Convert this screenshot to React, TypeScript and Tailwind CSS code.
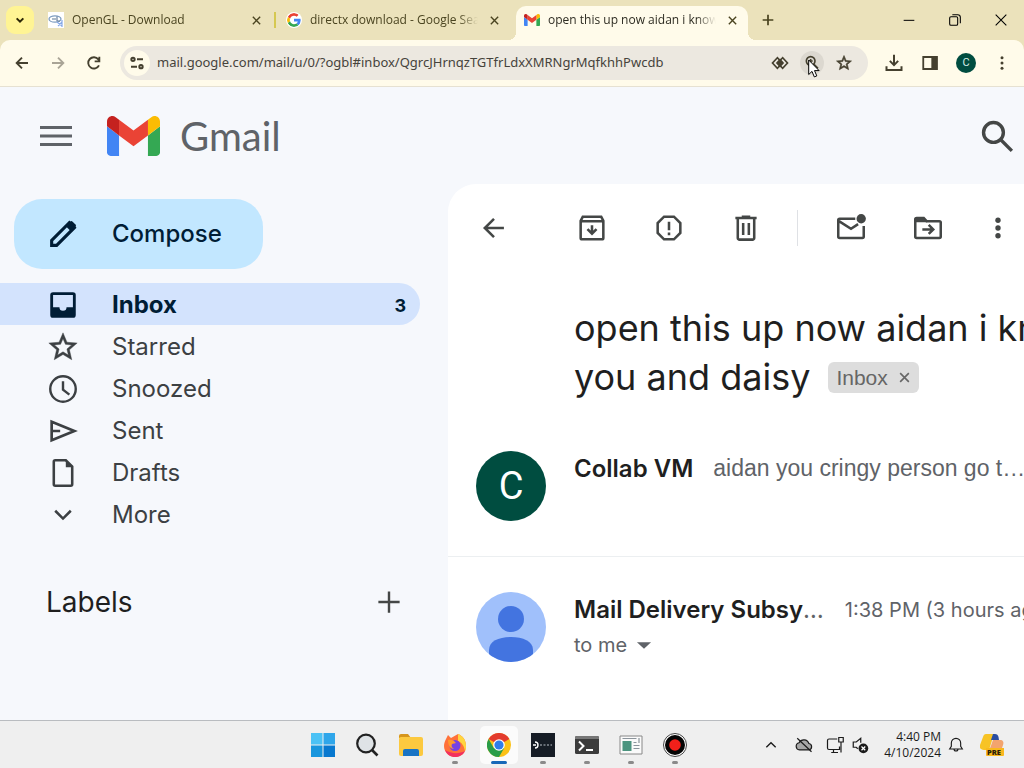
import React from 'react';

interface IconProps {
    className?: string;
    strokeWidth?: number;
    children: React.ReactNode;
}

const Icon: React.FC<IconProps> = ({ className = 'size-[34px]', strokeWidth = 2, children }) => (
    <svg
        viewBox="0 0 24 24"
        fill="none"
        stroke="currentColor"
        strokeWidth={strokeWidth}
        aria-hidden="true"
        className={`shrink-0 ${className}`}
    >
        {children}
    </svg>
);

const STAR_PATH = 'M22 9.24l-7.19-.62L12 2 9.19 8.63 2 9.24l5.46 4.73L5.82 21 12 17.27 18.18 21l-1.63-7.03L22 9.24zM12 15.4l-3.76 2.27 1-4.28-3.32-2.88 4.38-.38L12 6.1l1.71 4.04 4.38.38-3.32 2.88 1 4.28L12 15.4z';

const GmailMark = ({ className }: { className: string }) => (
    <svg viewBox="52 42 88 66" aria-hidden="true" className={className}>
        <path fill="#4285f4" d="M58 108h14V74L52 59v43c0 3.32 2.69 6 6 6" />
        <path fill="#34a853" d="M120 108h14c3.32 0 6-2.69 6-6V59l-20 15" />
        <path fill="#fbbc04" d="M120 48v26l20-15v-8c0-7.42-8.47-11.65-14.4-7.2" />
        <path fill="#ea4335" d="M72 74V48l24 18 24-18v26L96 92" />
        <path fill="#c5221f" d="M52 51v8l20 15V48l-5.6-4.2c-5.94-4.45-14.4-.22-14.4 7.2" />
    </svg>
);

const GoogleMark = () => (
    <svg viewBox="0 0 48 48" aria-hidden="true" className="size-4 shrink-0 rounded-full bg-white p-px">
        <path fill="#ea4335" d="M24 9.5c3.54 0 6.71 1.22 9.21 3.6l6.85-6.85C35.9 2.38 30.47 0 24 0 14.62 0 6.51 5.38 2.56 13.22l7.98 6.19C12.43 13.72 17.74 9.5 24 9.5z" />
        <path fill="#4285f4" d="M46.98 24.55c0-1.57-.15-3.09-.38-4.55H24v9.02h12.94c-.58 2.96-2.26 5.48-4.78 7.18l7.73 6c4.51-4.18 7.09-10.36 7.09-17.65z" />
        <path fill="#fbbc05" d="M10.53 28.59a14.5 14.5 0 0 1 0-9.18l-7.98-6.19a24 24 0 0 0 0 21.56l7.98-6.19z" />
        <path fill="#34a853" d="M24 48c6.48 0 11.93-2.13 15.89-5.81l-7.73-6c-2.15 1.45-4.92 2.3-8.16 2.3-6.26 0-11.57-4.22-13.47-9.91l-7.98 6.19C6.51 42.62 14.62 48 24 48z" />
    </svg>
);

const OpenGLMark = () => (
    <svg viewBox="0 0 16 16" fill="none" aria-hidden="true" className="size-4 shrink-0 bg-white">
        <ellipse cx="7" cy="7" rx="6" ry="3.2" stroke="#7d9cc0" strokeWidth="1.3" />
        <path d="M4 7h4M9 4.500v4.500h3" stroke="#5b7694" strokeWidth="1.1" />
        <path d="M9 10l5 4M10 14l4-4M14 8v7" stroke="#86a9e8" strokeWidth="1.2" />
    </svg>
);

const CloseIcon = ({ className }: { className: string }) => (
    <Icon className={className} strokeWidth={3}>
        <path d="M4 4l16 16M20 4L4 20" />
    </Icon>
);

const tabs = [
    { title: 'OpenGL - Download', icon: <OpenGLMark />, active: false },
    { title: 'directx download - Google Search', icon: <GoogleMark />, active: false },
    { title: 'open this up now aidan i know', icon: <GmailMark className="h-3 w-4 shrink-0" />, active: true },
];

const TabStrip = () => (
    <div className="flex h-10 items-stretch bg-[#ebe2bb] text-[#4a4420]">
        <button type="button" aria-label="Search tabs" className="mt-1.5 ml-1.5 flex size-7 shrink-0 items-center justify-center rounded-[9px] bg-[#fff494] text-[#2b2606]">
            <Icon className="size-4" strokeWidth={3}>
                <path d="M7 9.500l5 5 5-5" />
            </Icon>
        </button>
        <div className="ml-1.5 flex min-w-0 gap-1.5 pt-1.5">
            {tabs.map((tab, i) => (
                <div
                    key={tab.title}
                    className={`relative flex w-[232px] min-w-0 items-center gap-2 px-2 pb-1.5 ${tab.active ? 'rounded-t-[10px] bg-[#fffbea]' : ''}`}
                >
                    {tab.icon}
                    <span className={`min-w-0 flex-1 overflow-hidden font-['Open_Sans'] text-[12px] leading-4 whitespace-nowrap [mask-image:linear-gradient(to_left,transparent,black_20px)] ${tab.active ? 'text-[#2e2c22]' : ''}`}>
                        {tab.title}
                    </span>
                    <button type="button" aria-label={`Close ${tab.title}`} className="flex size-4 shrink-0 items-center justify-center">
                        <CloseIcon className="size-[11px]" />
                    </button>
                    {i === 0 && <span className="absolute top-1.5 -right-1 h-4 w-0.5 bg-[#d5c850]" />}
                    {tab.active && (
                        <>
                            <span className="absolute bottom-0 -left-2 size-2 bg-[radial-gradient(circle_at_0_0,#ebe2bb_8px,#fffbea_8px)]" />
                            <span className="absolute -right-2 bottom-0 size-2 bg-[radial-gradient(circle_at_100%_0,#ebe2bb_8px,#fffbea_8px)]" />
                        </>
                    )}
                </div>
            ))}
        </div>
        <button type="button" aria-label="New tab" className="ml-1.5 flex w-7 shrink-0 items-center justify-center">
            <Icon className="size-4" strokeWidth={2.6}>
                <path d="M12 4v16M4 12h16" />
            </Icon>
        </button>
        <div className="ml-auto flex text-black">
            <button type="button" aria-label="Minimize" className="flex w-[46px] items-center justify-center">
                <Icon className="size-4" strokeWidth={1.5}>
                    <path d="M4 12.5h16" />
                </Icon>
            </button>
            <button type="button" aria-label="Restore" className="flex w-[46px] items-center justify-center">
                <Icon className="size-4" strokeWidth={1.6}>
                    <rect x="4" y="7" width="12" height="13" rx="2" />
                    <path d="M8 4h8a4 4 0 0 1 4 4v9" />
                </Icon>
            </button>
            <button type="button" aria-label="Close window" className="flex w-[46px] items-center justify-center">
                <Icon className="size-4" strokeWidth={1.6}>
                    <path d="M4 4l16 16M20 4L4 20" />
                </Icon>
            </button>
        </div>
    </div>
);

const ToolbarButton = ({ label, className = '', children }: { label: string; className?: string; children: React.ReactNode }) => (
    <button type="button" aria-label={label} className={`flex h-7 w-9 shrink-0 items-center justify-center ${className}`}>
        {children}
    </button>
);

const AddressBar = () => (
    <div className="bg-[#ebe2bb]">
        <div className="flex h-[47px] items-center rounded-t-[10px] border-b border-[#e6e1d2] bg-[#fffbea] pl-1 text-[#45402f]">
            <ToolbarButton label="Back">
                <Icon className="size-4" strokeWidth={2.8}>
                    <path d="M21 12H5M12 4l-8 8 8 8" />
                </Icon>
            </ToolbarButton>
            <ToolbarButton label="Forward" className="text-[#a9a496]">
                <Icon className="size-4" strokeWidth={2.8}>
                    <path d="M3 12h16M12 4l8 8-8 8" />
                </Icon>
            </ToolbarButton>
            <ToolbarButton label="Reload">
                <Icon className="size-4" strokeWidth={2.8}>
                    <path d="M19.500 15.500A8.500 8.500 0 1 1 18.500 6.500L20 8.500M20 2.500v7h-7" />
                </Icon>
            </ToolbarButton>
            <div className="ml-2 flex h-[34px] min-w-0 flex-1 items-center rounded-full bg-[#ece8e0] pl-1">
                <button type="button" aria-label="Site information" className="flex size-[26px] shrink-0 items-center justify-center rounded-full bg-[#fffbea]">
                    <Icon className="size-4" strokeWidth={3}>
                        <circle cx="6" cy="6.500" r="2.500" />
                        <path d="M12 6.500h9M3 17.500h9" />
                        <circle cx="18" cy="17.500" r="2.500" />
                    </Icon>
                </button>
                <input
                    type="text"
                    aria-label="Address"
                    readOnly
                    value="mail.google.com/mail/u/0/?ogbl#inbox/QgrcJHrnqzTGTfrLdxXMRNgrMqfkhhPwcdb"
                    className="ml-[7px] min-w-0 flex-1 bg-transparent font-['Noto_Sans'] text-[13px] text-[#46433c] outline-none"
                />
                <button type="button" aria-label="Immersive view" className="flex size-8 shrink-0 items-center justify-center">
                    <Icon className="size-[18px]" strokeWidth={2.2}>
                        <path d="M8.500 5L2 12l6.500 7 6.500-7zM15.500 5L9 12l6.500 7 6.500-7z" />
                        <path d="M12 7.500l4 4.500-4 4.500L8 12z" fill="currentColor" />
                    </Icon>
                </button>
                <button type="button" aria-label="Zoom" className="relative flex size-8 shrink-0 items-center justify-center">
                    <span className="flex size-6 items-center justify-center rounded-full bg-[#dcd8d0]">
                        <Icon className="size-4" strokeWidth={2.4}>
                            <circle cx="10" cy="9" r="6.500" />
                            <path d="M7 9h6M10 6v6M15 14l6 6" />
                        </Icon>
                    </span>
                    <svg viewBox="0 0 12 19" aria-hidden="true" className="absolute top-3 left-3 h-[19px] w-3">
                        <path d="M.7 1v14.500l3.300-3.100 2.300 5.500 2.500-1-2.300-5.300h4.600z" fill="#fff" stroke="#000" strokeWidth="1" />
                    </svg>
                </button>
                <button type="button" aria-label="Bookmark this tab" className="mr-2 flex size-8 shrink-0 items-center justify-center">
                    <Icon className="size-[18px]" strokeWidth={0.8}>
                        <path d={STAR_PATH} fill="currentColor" />
                    </Icon>
                </button>
            </div>
            <ToolbarButton label="Downloads" className="ml-2">
                <Icon className="size-5" strokeWidth={2.4}>
                    <path d="M12 2v12M7 9.500l5 5 5-5M3 16v4.500h18V16" />
                </Icon>
            </ToolbarButton>
            <ToolbarButton label="Side panel">
                <Icon className="size-[18px]" strokeWidth={2.4}>
                    <path d="M3 4h18v16H3z" />
                    <path d="M15 4h6v16h-6z" fill="currentColor" />
                </Icon>
            </ToolbarButton>
            <ToolbarButton label="Profile">
                <span className="flex size-5 items-center justify-center rounded-full bg-[#004d40] font-[Roboto] text-[11px] text-[#d5ece4]">C</span>
            </ToolbarButton>
            <ToolbarButton label="Chrome menu" className="mr-1">
                <Icon className="size-[18px]">
                    <g fill="currentColor" stroke="none">
                        <circle cx="12" cy="5" r="2" />
                        <circle cx="12" cy="12" r="2" />
                        <circle cx="12" cy="19" r="2" />
                    </g>
                </Icon>
            </ToolbarButton>
        </div>
    </div>
);

const GmailHeader = () => (
    <header className="flex h-[97px] shrink-0 items-center pr-2.5 pl-10 text-[#5f6368]">
        <button type="button" aria-label="Main menu">
            <Icon className="h-6 w-8">
                <path d="M-4 3.500h32M-4 12h32M-4 20.500h32" strokeWidth="3" />
            </Icon>
        </button>
        <a href="#inbox" className="ml-[35px] flex items-center gap-5">
            <GmailMark className="h-10 w-[53px]" />
            <span className="font-[Lato] text-[40px] leading-none">Gmail</span>
        </a>
        <button type="button" aria-label="Search mail" className="ml-auto text-[#444746]">
            <Icon className="size-[34px]" strokeWidth={2.4}>
                <circle cx="9.500" cy="9.500" r="7" />
                <path d="M14.500 14.500l8 8" />
            </Icon>
        </button>
    </header>
);

const folders = [
    {
        name: 'Inbox',
        count: 3,
        icon: (
            <path
                d="M19 3H5a2 2 0 0 0-2 2v14a2 2 0 0 0 2 2h14a2 2 0 0 0 2-2V5a2 2 0 0 0-2-2zm0 10.500h-4.500a2.500 2.500 0 0 1-5 0H5V5h14z"
                fill="currentColor"
                stroke="none"
            />
        ),
    },
    { name: 'Starred', icon: <path d={STAR_PATH} fill="currentColor" strokeWidth="0.300" /> },
    {
        name: 'Snoozed',
        icon: (
            <>
                <circle cx="12" cy="12" r="9" strokeWidth="1.700" />
                <path d="M12 6.500v6l4.500 3.500" strokeWidth="1.700" />
            </>
        ),
    },
    { name: 'Sent', icon: <path d="M4 5.500L20 12 4 18.500zM4 12h6" strokeWidth="1.900" /> },
    {
        name: 'Drafts',
        icon: (
            <>
                <path d="M14 3H6.500a1 1 0 0 0-1 1v16a1 1 0 0 0 1 1h11a1 1 0 0 0 1-1V7.500z" strokeWidth="1.800" />
                <path d="M14 3v5h5z" fill="currentColor" stroke="none" />
            </>
        ),
    },
    { name: 'More', icon: <path d="M6.500 9l5.500 5.500L17.500 9" strokeWidth="1.800" /> },
];

const Sidebar = () => (
    <aside className="w-[448px] shrink-0 pt-[15px]">
        <button type="button" className="ml-3.5 flex h-[70px] w-[249px] items-center gap-8 rounded-[28px] bg-[#c2e7ff] pl-8 text-[24px] font-medium text-[#001d35]">
            <Icon>
                <path d="M4 20v-3.500L16.500 4l3.500 3.500L7.500 20z" strokeWidth="2.200" />
                <path d="M14 6.500L17 3.300a1.300 1.300 0 0 1 1.800 0l2 2a1.300 1.300 0 0 1 0 1.800L17.500 10z" fill="currentColor" stroke="none" />
            </Icon>
            Compose
        </button>
        <nav className="mt-3.5 pr-7">
            {folders.map((folder) => (
                <a
                    key={folder.name}
                    href={`#${folder.name.toLowerCase()}`}
                    className={`flex h-[42px] items-center pt-0.5 pr-3.5 pl-[46px] text-[24px] ${folder.count ? 'rounded-r-full bg-[#d3e3fd] font-bold text-[#001d35]' : 'text-[#3c4043]'}`}
                >
                    <Icon>{folder.icon}</Icon>
                    <span className="ml-8 flex-1">{folder.name}</span>
                    {folder.count && <span className="text-[18px]">{folder.count}</span>}
                </a>
            ))}
        </nav>
        <div className="mt-[46px] flex h-[42px] items-center justify-between pr-[42px] pl-[46px] text-[#444746]">
            <h2 className="text-[28px] text-[#1f1f1f]">Labels</h2>
            <button type="button" aria-label="Create new label">
                <Icon>
                    <path d="M12 4.500v15M4.500 12h15" strokeWidth="1.700" />
                </Icon>
            </button>
        </div>
    </aside>
);

const ActionButton = ({ label, className = '', children }: { label: string; className?: string; children: React.ReactNode }) => (
    <button type="button" aria-label={label} className={className}>
        <Icon strokeWidth={1.8}>{children}</Icon>
    </button>
);

const MailActions = () => (
    <div className="flex h-[87px] items-center pl-[29px] text-[#444746]">
        <ActionButton label="Back to Inbox">
            <path d="M19 12H5.500M12 5.500L5.500 12l6.500 6.500" />
        </ActionButton>
        <div className="ml-16 flex gap-[43px]">
            <ActionButton label="Archive">
                <path d="M4 7l1.500-3h13L20 7v12a1 1 0 0 1-1 1H5a1 1 0 0 1-1-1zM4 7.200h16M12 10v5.500M8.800 12.800L12 16l3.200-3.200" />
            </ActionButton>
            <ActionButton label="Report spam">
                <path d="M8.500 4h7L20 8.500v7L15.500 20h-7L4 15.500v-7zM12 7.500v6M12 15.200v2" />
            </ActionButton>
            <ActionButton label="Delete">
                <path d="M4.500 5h15M9 4h6M6.200 5v14a1.200 1.200 0 0 0 1.200 1.200h9.200a1.200 1.200 0 0 0 1.200-1.200V5M10 8.500v8.500M14 8.500v8.500" />
            </ActionButton>
        </div>
        <span className="ml-[34px] h-9 w-px bg-[#dfe1e5]" />
        <div className="ml-9 flex gap-[43px]">
            <ActionButton label="Mark as unread">
                <path d="M15 5.500H4a1 1 0 0 0-1 1V18a1 1 0 0 0 1 1h16a1 1 0 0 0 1-1v-7.500M3.500 7.200L12 12.500l5-3.200" />
                <circle cx="19.200" cy="5.500" r="3.300" fill="currentColor" stroke="none" />
            </ActionButton>
            <ActionButton label="Move to">
                <path d="M3 18V6a1 1 0 0 1 1-1h5l2 2.200h9a1 1 0 0 1 1 1V18a1 1 0 0 1-1 1H4a1 1 0 0 1-1-1zM8 13h7.500M12.500 9.800l3.200 3.200-3.200 3.200" />
                <path d="M3 5h6l2.500 3H3z" fill="currentColor" stroke="none" />
            </ActionButton>
        </div>
        <ActionButton label="More" className="ml-9">
            <g fill="currentColor" stroke="none">
                <circle cx="12" cy="6.500" r="1.900" />
                <circle cx="12" cy="12" r="1.900" />
                <circle cx="12" cy="17.500" r="1.900" />
            </g>
        </ActionButton>
    </div>
);

const Conversation = () => (
    <main className="min-w-0 flex-1 overflow-hidden rounded-tl-[28px] bg-white">
        <MailActions />
        <div className="h-[145px] pt-[33px] pl-[126px] whitespace-nowrap">
            <h1 className="text-[36px] leading-[49px] text-[#1f1f1f]">
                open this up now aidan i know
                <span className="flex items-center">
                    you and daisy
                    <span className="ml-[18px] flex h-[31px] items-center gap-2.5 rounded-md bg-[#dddddd] px-2 font-['Liberation_Sans'] text-[21px] leading-none text-[#666666]">
                        Inbox
                        <button type="button" aria-label="Remove label Inbox">
                            <CloseIcon className="size-[13px]" />
                        </button>
                    </span>
                </span>
            </h1>
        </div>
        <article className="flex h-[141px] border-b border-[#eceff1] pt-[35px] pl-7 whitespace-nowrap">
            <span className="flex size-[70px] shrink-0 items-center justify-center rounded-full bg-[#004d40] font-[Roboto] text-[38px] text-white">C</span>
            <div className="ml-7 flex h-[35px] min-w-0 flex-1 items-center gap-5">
                <h3 className="text-[24px] font-semibold text-[#1f1f1f]">Collab VM</h3>
                <p className="min-w-0 flex-1 font-['Liberation_Sans'] text-[23px] text-[#5f6368]">aidan you cringy person go t…</p>
            </div>
        </article>
        <article className="flex pt-[35px] pl-7 whitespace-nowrap">
            <svg viewBox="0 0 70 70" aria-hidden="true" className="size-[70px] shrink-0 rounded-full bg-[#a0c0fb]">
                <circle cx="35" cy="27" r="13" fill="#4374e0" />
                <path d="M13 58c0-9 10-13 22-13s22 4 22 13v12H13z" fill="#4374e0" />
            </svg>
            <div className="ml-7 text-[#5f6368]">
                <div className="flex h-[35px] items-center gap-[21px]">
                    <h3 className="text-[24px] font-semibold text-[#1f1f1f]">
                        Mail Delivery Subsy<span className="font-normal text-[#5f6368]">…</span>
                    </h3>
                    <time className="text-[20px]">1:38 PM (3 hours ago)</time>
                </div>
                <button type="button" className="flex h-[35px] items-center text-[20px]">
                    to me
                    <Icon className="ml-1 size-[26px]">
                        <path d="M5.500 9.500h13L12 15.500z" fill="currentColor" stroke="none" />
                    </Icon>
                </button>
            </div>
        </article>
    </main>
);

const apps = [
    {
        name: 'Start',
        running: false,
        icon: (
            <>
                <path d="M0 0h11.500v11.500H0z" fill="#4cc2f5" />
                <path d="M12.500 0H24v11.500H12.500z" fill="#2fa6ea" />
                <path d="M0 12.500h11.500V24H0z" fill="#1996dd" />
                <path d="M12.500 12.500H24V24H12.500z" fill="#0878cf" />
            </>
        ),
    },
    {
        name: 'Search',
        running: false,
        icon: (
            <>
                <path d="M17 17l5.500 5.500" stroke="#222" strokeWidth="2.600" />
                <circle cx="11" cy="10.500" r="8.800" fill="#dfe3e6" stroke="#222" strokeWidth="2.200" />
            </>
        ),
    },
    {
        name: 'File Explorer',
        running: false,
        icon: (
            <>
                <path d="M0 3a2 2 0 0 1 2-2h7l3 4H0z" fill="#d6951c" />
                <rect y="4" width="24" height="19" rx="2" fill="#fcc93f" />
                <path d="M4 23v-5a2 2 0 0 1 2-2h12a2 2 0 0 1 2 2v5z" fill="#1873c4" />
            </>
        ),
    },
    {
        name: 'Firefox',
        running: true,
        icon: (
            <>
                <path d="M3 6l2-4 3 3 7-4c5 2 8 6 8 12 0 7-5 11-11 11S1 19 1 13c0-3 1-5 2-7z" fill="#ff7139" />
                <path d="M15 1c5 2 8 6 8 12 0 2 0 3-1 5-1-6-4-9-7-10z" fill="#ffd53f" />
                <path d="M2 17c2 5 6 7 10 7s8-2 10-6c-6 3-13 3-20-1z" fill="#f2305f" />
                <circle cx="12" cy="12.500" r="5.500" fill="#7542e5" />
                <path d="M5 7c3-1 6 0 8 3l-4 1c-1 2 0 4 2 5-4 0-6-4-6-9z" fill="#ff9a2e" />
            </>
        ),
    },
    {
        name: 'Google Chrome',
        running: true,
        icon: (
            <>
                <circle cx="12" cy="12" r="12" fill="#fbc116" />
                <path d="M12 12L1.600 6A12 12 0 0 1 22.400 6z" fill="#e33b2e" />
                <path d="M1.600 6A12 12 0 0 0 12 24l5.200-9H6.800z" fill="#2a9d49" />
                <circle cx="12" cy="12" r="5.800" fill="#fff" />
                <circle cx="12" cy="12" r="4.600" fill="#2f7de9" />
            </>
        ),
    },
    {
        name: 'Display Driver Uninstaller',
        running: true,
        icon: (
            <>
                <path d="M0 0h24v24H0z" fill="#161c25" />
                <path d="M4 9a3 3 0 0 1 0 6M2 12h3" stroke="#fff" strokeWidth="1.400" />
                <path d="M9 12h2M12.500 12h2M16 12h2M19.500 12h1.500" stroke="#b9c0c8" strokeWidth="1.200" />
            </>
        ),
    },
    {
        name: 'Terminal',
        running: true,
        icon: (
            <>
                <rect y="3" width="24" height="18" rx="1.500" fill="#3c3c3c" />
                <path d="M0 6V4.500A1.500 1.500 0 0 1 1.500 3h21A1.500 1.500 0 0 1 24 4.500V6z" fill="#777" />
                <path d="M4 8.500l4.500 4.500L4 17.500M11 17h7" stroke="#fff" strokeWidth="2" />
            </>
        ),
    },
    {
        name: 'System Configuration',
        running: true,
        icon: (
            <>
                <path d="M1 3h22v18H1z" fill="#fafafa" stroke="#888" />
                <path d="M3.500 8h9v10h-9z" fill="#4b947f" />
                <path d="M3.500 5.500h14M14.500 9.500h3M14.500 12.500h6M14.500 15.500h6M20 5v5" stroke="#8b949b" strokeWidth="1.200" />
            </>
        ),
    },
    {
        name: 'Recorder',
        running: true,
        icon: (
            <>
                <circle cx="12" cy="12" r="11.500" fill="#fff" stroke="#444" />
                <circle cx="12" cy="12" r="10" fill="#050505" />
                <circle cx="12" cy="12" r="5.800" fill="#f2201a" />
            </>
        ),
    },
];

const Taskbar = () => (
    <footer className="flex h-12 shrink-0 items-center border-t border-[#b9bcc0] bg-[#efefef] text-[#1b1b1b]">
        <div className="flex flex-1 justify-end gap-1.5">
            {apps.map((app) => {
                const focused = app.name === 'Google Chrome';
                return (
                    <button
                        key={app.name}
                        type="button"
                        aria-label={app.name}
                        className={`relative flex size-[38px] items-center justify-center rounded-[5px] ${focused ? 'bg-[#fbfbfb]' : ''}`}
                    >
                        <svg viewBox="0 0 24 24" fill="none" aria-hidden="true" className="size-6">
                            {app.icon}
                        </svg>
                        {app.running && (
                            <span className={`absolute bottom-0 h-[3px] rounded-full ${focused ? 'w-4 bg-[#1768b8]' : 'w-1.5 bg-[#8a8a8a]'}`} />
                        )}
                    </button>
                );
            })}
        </div>
        <div className="ml-[69px] flex items-center">
            <button type="button" aria-label="Show hidden icons" className="mr-4">
                <Icon className="size-4">
                    <path d="M5 15.500l7-7 7 7" />
                </Icon>
            </button>
            <Icon className="mr-[13px] size-[18px]" strokeWidth={1.6}>
                <path d="M6 18.500a4.800 4.800 0 0 1-.5-9.500 7 7 0 0 1 13 1 4.300 4.300 0 0 1 0 8.500z" fill="#a7a7a7" />
                <path d="M3 3l19 18" />
            </Icon>
            <Icon className="mr-[7px] size-[18px]" strokeWidth={1.6}>
                <path d="M15 4H4a2 2 0 0 0-2 2v10a2 2 0 0 0 2 2h14v-4M7 22h9M10 18v4M17 2h6v6h-6zM20 8v14" />
            </Icon>
            <Icon className="mr-2 size-[18px]" strokeWidth={1.6}>
                <path d="M13 9V3L7 8H3v7h4l2 2" />
                <circle cx="16.500" cy="16.500" r="6.500" fill="currentColor" stroke="none" />
                <path d="M14 14l5 5M19 14l-5 5" stroke="#fff" />
            </Icon>
            <div className="w-16 text-right font-['Open_Sans'] text-[12px] leading-4 whitespace-nowrap">
                <div>4:40 PM</div>
                <div>4/10/2024</div>
            </div>
            <button type="button" aria-label="Notifications" className="ml-[7px]">
                <Icon className="size-4" strokeWidth={1.7}>
                    <path d="M2.500 18h19L19 14V9a7 7 0 0 0-14 0v5zM9 18a3 3 0 0 0 6 0" />
                </Icon>
            </button>
            <button type="button" aria-label="Copilot preview" className="mr-5 ml-4">
                <svg viewBox="0 0 24 24" aria-hidden="true" className="size-6">
                    <path d="M6 1h8L9 17H4c-3 0-5-2-4-5L3 4c.500-2 1.500-3 3-3z" fill="#f7c325" />
                    <path d="M13 1h2c2 0 3 1 3.500 3l.5 3h-8z" fill="#2b4ea2" />
                    <path d="M13 7h7c3 0 4 2 3 5l-2 6H9z" fill="#f3a46e" />
                    <path d="M6 15h18v7a1 1 0 0 1-1 1H7a1 1 0 0 1-1-1z" fill="#f9b81d" />
                    <text x="7" y="22" fontFamily="Open Sans" fontSize="7.500" fontWeight="800" fill="#2a2108">PRE</text>
                </svg>
            </button>
        </div>
    </footer>
);

export default function App() {
    return (
        <div className="flex min-h-screen flex-col bg-[#f6f8fc] font-[Inter,sans-serif]">
            <TabStrip />
            <AddressBar />
            <GmailHeader />
            <div className="flex flex-1">
                <Sidebar />
                <Conversation />
            </div>
            <Taskbar />
        </div>
    );
}
